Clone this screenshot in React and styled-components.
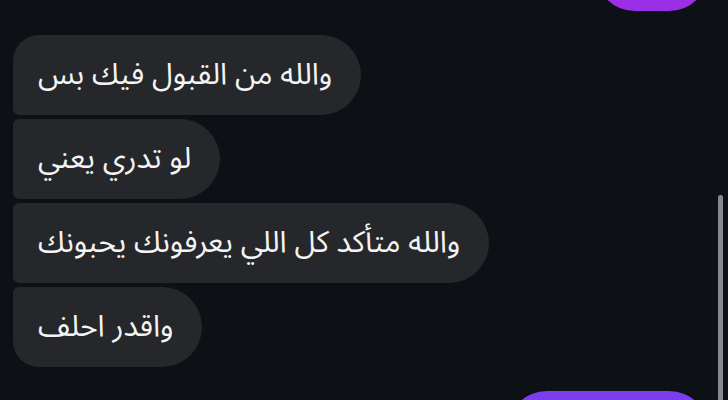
import React from "react";
import styled, { createGlobalStyle, css } from "styled-components";

const Global = createGlobalStyle`
  html, body { margin: 0; padding: 0; background: #0d1014; }
  body { width: 728px; height: 400px; overflow: hidden; }
`;

const Viewport = styled.div`
  position: relative;
  width: 728px;
  height: 400px;
  overflow: hidden;
  background: #0d1014;
  font-family: "Noto Sans Arabic", "Noto Naskh Arabic", "DejaVu Sans", sans-serif;
`;

const Thread = styled.div`
  display: flex;
  flex-direction: column;
  gap: 24px;
  padding: 0 19px 0 13px;
  margin-top: -69px;
`;

const Group = styled.div`
  display: flex;
  flex-direction: column;
  gap: 4px;
  align-items: ${(p) => (p.$out ? "flex-end" : "flex-start")};
`;

const Bubble = styled.div`
  box-sizing: border-box;
  height: 80px;
  display: flex;
  align-items: center;
  padding: 0 29px 0 25px;
  direction: rtl;
  color: #f4f4f5;
  font-size: 30px;
  line-height: 1;
  white-space: nowrap;
  background: #25272b;
  border-radius: 40px;
  ${(p) =>
    !p.$out &&
    css`
      border-top-left-radius: ${p.$first ? "26px" : "6px"};
      border-bottom-left-radius: ${p.$last ? "26px" : "6px"};
    `}
  ${(p) =>
    p.$out &&
    css`
      background: ${p.$color};
      width: ${p.$w}px;
    `}
`;

const Scrollbar = styled.div`
  position: absolute;
  right: 5px;
  top: 195px;
  width: 5px;
  height: 220px;
  border-radius: 3px;
  background: #86888b;
`;

const incoming = [
  "والله من القبول فيك بس",
  "لو تدري يعني",
  "والله متأكد كل اللي يعرفونك يحبونك",
  "واقدر احلف",
];

export default function App() {
  return (
    <Viewport>
      <Global />
      <Thread>
        <Group $out>
          <Bubble $out $color="#9a2fe6" $w={114} />
        </Group>
        <Group>
          {incoming.map((t, i) => (
            <Bubble key={i} $first={i === 0} $last={i === incoming.length - 1}>
              {t}
            </Bubble>
          ))}
        </Group>
        <Group $out>
          <Bubble $out $color="#7c3cf0" $w={202} />
        </Group>
      </Thread>
      <Scrollbar />
    </Viewport>
  );
}
